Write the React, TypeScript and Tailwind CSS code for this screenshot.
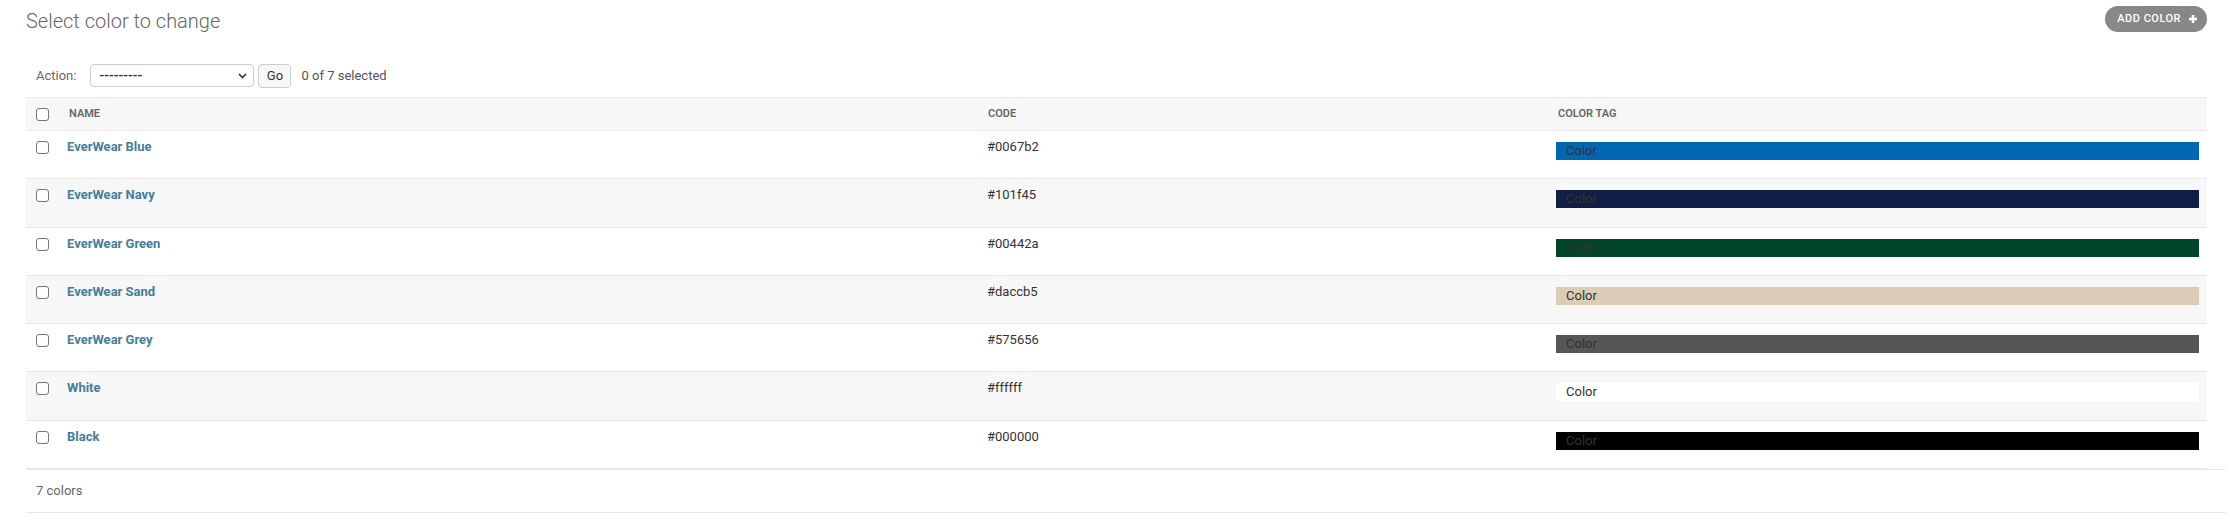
import React from "react";

const colors = [
  { name: "EverWear Blue", code: "#0067b2" },
  { name: "EverWear Navy", code: "#101f45" },
  { name: "EverWear Green", code: "#00442a" },
  { name: "EverWear Sand", code: "#daccb5" },
  { name: "EverWear Grey", code: "#575656" },
  { name: "White", code: "#ffffff" },
  { name: "Black", code: "#000000" },
];

function Box() {
  return <div className="w-[13px] h-[13px] border border-[#767676] rounded-[3px] bg-white" />;
}

export default function App() {
  return (
    <div className="w-[2230px] h-[529px] bg-white font-[Roboto,sans-serif] text-[#333] pl-[26px] pr-[4px] pt-[6px]">
      <div className="mr-[19px] flex justify-between items-start">
        <h1 className="text-[20px] leading-[24px] font-light text-[#666] mt-[3px]">Select color to change</h1>
        <div className="h-[26px] rounded-full bg-[#888] flex items-center pl-[12px] pr-[9px] text-white text-[11px] font-medium tracking-[0.5px] uppercase">
          <span>Add color</span>
          <svg className="ml-[7px]" width="10" height="10" viewBox="0 0 10 10">
            <path d="M5 1v8M1 5h8" stroke="#fff" strokeWidth="2.6" />
          </svg>
        </div>
      </div>

      <div className="mr-[19px] mt-[21px] h-[43px] flex items-center pl-[10px] text-[13px] text-[#666]">
        <span>Action:</span>
        <div className="ml-[14px] w-[164px] h-[23px] border border-[#ccc] rounded-[4px] bg-white flex items-center justify-between pl-[8px] pr-[6px] text-[#333]">
          <span className="text-[14px] font-medium">---------</span>
          <svg width="9" height="6" viewBox="0 0 9 6">
            <path d="M1 1l3.5 3.5L8 1" stroke="#333" strokeWidth="1.6" fill="none" />
          </svg>
        </div>
        <div className="ml-[4px] w-[33px] h-[24px] border border-[#ccc] rounded-[4px] bg-[#f8f8f8] flex items-center justify-center text-[#333] text-[13px]">
          Go
        </div>
        <span className="ml-[10px] text-[#555]">0 of 7 selected</span>
      </div>

      <div className="mr-[19px]">
        <div className="flex items-center h-[34px] bg-[#f7f7f7] border-y border-[#e8e8e8] text-[11px] font-semibold text-[#666] uppercase">
          <div className="w-[33px] pl-[10px] flex items-center">
            <Box />
          </div>
          <div className="w-[919px] pl-[10px]">Name</div>
          <div className="w-[570px] pl-[10px]">Code</div>
          <div className="flex-1 pl-[10px]">Color tag</div>
        </div>
        {colors.map((c, i) => (
          <div
            key={c.name}
            className={`flex items-start h-[48.3px] border-b border-[#e8e8e8] text-[13px] leading-[18px] ${i % 2 === 1 ? "bg-[#f7f7f7]" : "bg-white"}`}
          >
            <div className="w-[33px] pl-[10px] pt-[10px]">
              <Box />
            </div>
            <div className="w-[919px] pl-[8px] pt-[7px] font-bold text-[#447e9b]">{c.name}</div>
            <div className="w-[570px] pl-[9px] pt-[7px]">{c.code}</div>
            <div className="flex-1 px-[8px] pt-[11px]">
              <div className="h-[18px] leading-[18px] pl-[10px] text-[#333]" style={{ backgroundColor: c.code }}>
                Color
              </div>
            </div>
          </div>
        ))}
      </div>

      <div className="border-y border-[#e8e8e8] pt-[10px] pb-[10px] pl-[10px] text-[13px] leading-[22px] text-[#666]">
        7 colors
      </div>
    </div>
  );
}
